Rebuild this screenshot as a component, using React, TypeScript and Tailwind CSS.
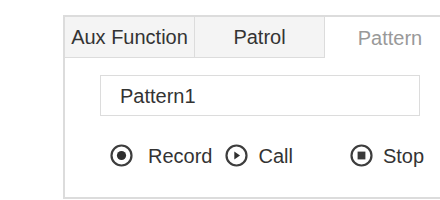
import React from "react";

function RadioDot() {
  return (
    <svg width="23" height="23" viewBox="0 0 23 23" className="shrink-0">
      <circle cx="11.5" cy="11.5" r="10" fill="none" stroke="#3d3d3d" strokeWidth="2.2" />
      <circle cx="11.5" cy="11.5" r="4.6" fill="#2f2f2f" />
    </svg>
  );
}

function PlayIcon() {
  return (
    <svg width="23" height="23" viewBox="0 0 23 23" className="shrink-0">
      <circle cx="11.5" cy="11.5" r="10" fill="none" stroke="#3d3d3d" strokeWidth="2.2" />
      <path d="M9.3 7.6 L15 11.5 L9.3 15.4 Z" fill="#2f2f2f" />
    </svg>
  );
}

function StopIcon() {
  return (
    <svg width="23" height="23" viewBox="0 0 23 23" className="shrink-0">
      <circle cx="11.5" cy="11.5" r="10" fill="none" stroke="#3d3d3d" strokeWidth="2.2" />
      <rect x="7.6" y="7.6" width="7.8" height="7.8" fill="#3a3a3a" />
    </svg>
  );
}

export default function App() {
  return (
    <div
      className="w-[440px] h-[200px] bg-white overflow-hidden pl-[63px] pt-[15px]"
      style={{ fontFamily: '"Liberation Sans", Arial, sans-serif' }}
    >
      <div className="w-[420px] h-[184px] border-2 border-[#dcdcdc] bg-white">
        <div className="flex h-[41px] text-[20px]">
          <div className="w-[130px] shrink-0 flex items-center justify-center bg-[#f4f4f4] border-r border-b border-[#dcdcdc] text-[#333]">
            Aux Function
          </div>
          <div className="w-[130px] shrink-0 flex items-center justify-center bg-[#f4f4f4] border-r border-b border-[#dcdcdc] text-[#333]">
            Patrol
          </div>
          <div className="w-[130px] shrink-0 flex items-center justify-center bg-white text-[#999]">
            Pattern
          </div>
        </div>
        <div className="ml-[35px] mt-[17px] w-[320px] h-[41px] border border-[#dcdcdc] flex items-center pl-[19px] text-[20px] text-[#333]">
          Pattern1
        </div>
        <div className="mt-[28px] ml-[45px] flex items-center h-[23px] text-[20px] text-[#333]">
          <RadioDot />
          <span className="ml-[15px]">Record</span>
          <span className="ml-[13px] flex items-center">
            <PlayIcon />
          </span>
          <span className="ml-[10px]">Call</span>
          <span className="ml-[57px] flex items-center">
            <StopIcon />
          </span>
          <span className="ml-[10px]">Stop</span>
        </div>
      </div>
    </div>
  );
}
